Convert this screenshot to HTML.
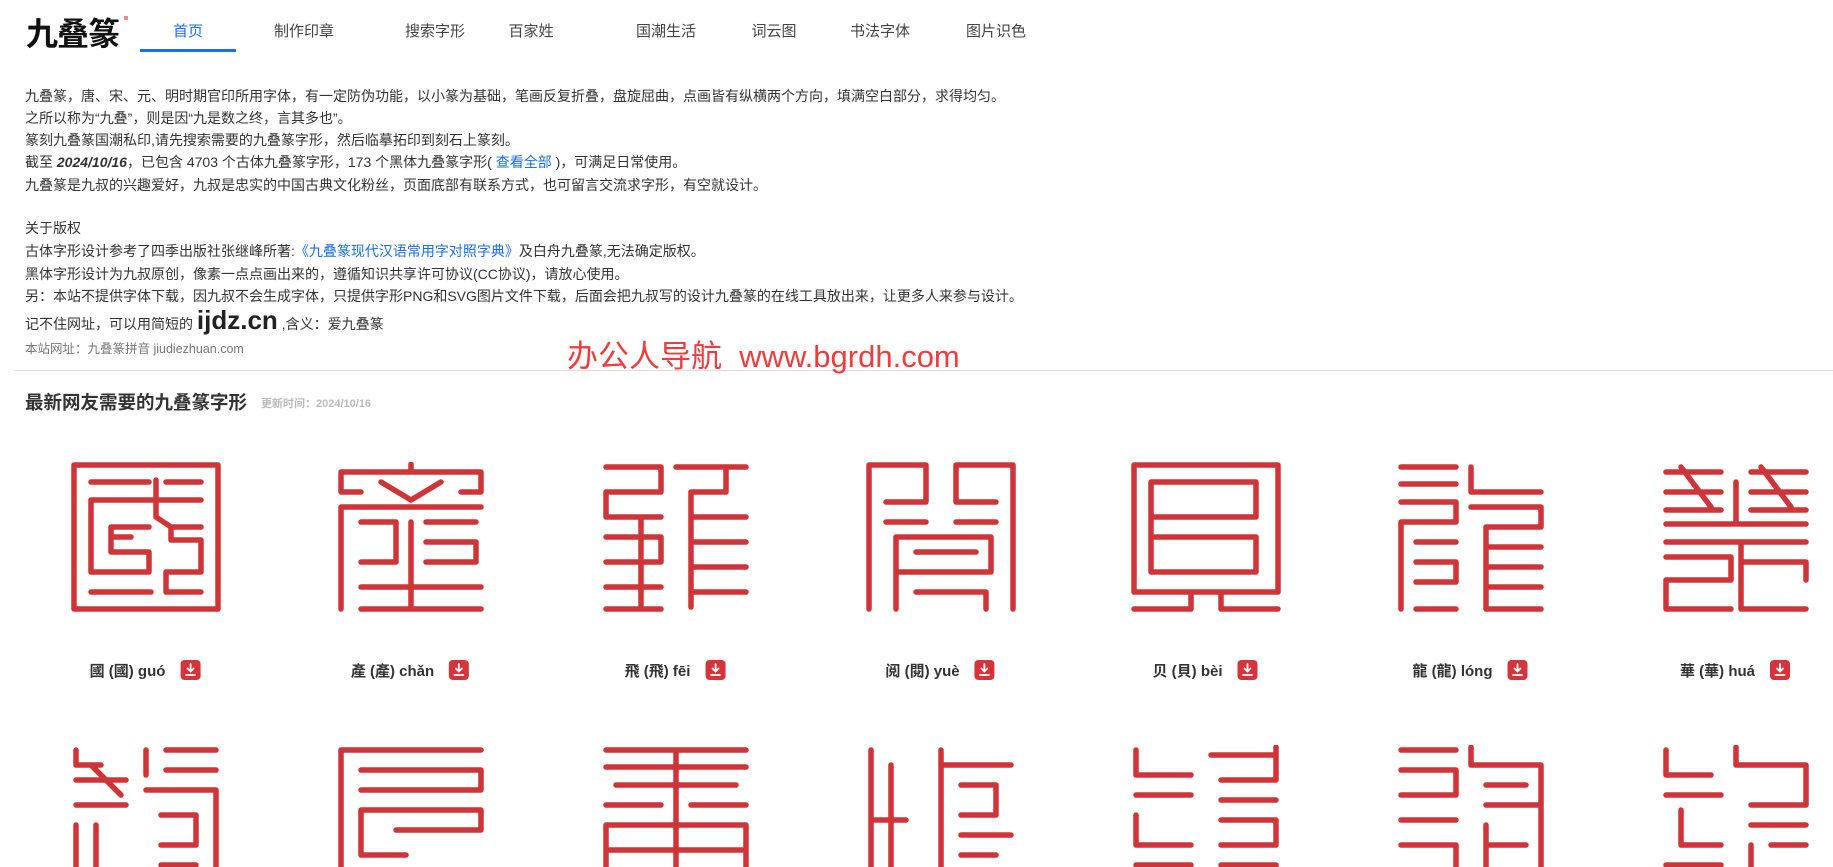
<!DOCTYPE html>
<html><head><meta charset="utf-8">
<style>
*{margin:0;padding:0;box-sizing:border-box}
html,body{width:1833px;height:867px;overflow:hidden;background:#fff}
body{position:relative;font-family:"Liberation Sans","Noto Sans CJK SC",sans-serif;color:#333}
.a{position:absolute;white-space:nowrap}
.logo{left:26px;top:9px;font-size:32px;font-weight:bold;color:#111;letter-spacing:-1px}
.dot{left:124px;top:16px;width:4px;height:4px;background:#f08a8a}
.nav{top:20px;font-size:15px;color:#444;transform:translateX(-50%)}
.ul{left:140px;top:49px;width:96px;height:3px;background:#1a6ef0}
.t{left:25px;font-size:14px;color:#333;line-height:22px}
.blue{color:#1a6ef0}
.g{width:150px;height:150px}
.g path{fill:none;stroke:#cf3538;stroke-width:5.5;stroke-linecap:round;stroke-linejoin:round}
.lb{top:660px;font-size:15px;font-weight:bold;color:#333;transform:translateX(-50%);display:flex;align-items:center;height:20px}
.ic{display:inline-block;width:20px;height:20px;background:#d7333a;border-radius:4px;margin-left:15px;position:relative}
</style></head><body>
<div class="a logo">九叠篆</div><div class="a dot"></div>
<div class="a nav" style="left:188px;color:#1a6ef0">首页</div>
<div class="a nav" style="left:304px">制作印章</div>
<div class="a nav" style="left:435px">搜索字形</div>
<div class="a nav" style="left:531px">百家姓</div>
<div class="a nav" style="left:666px">国潮生活</div>
<div class="a nav" style="left:774px">词云图</div>
<div class="a nav" style="left:880px">书法字体</div>
<div class="a nav" style="left:996px">图片识色</div>
<div class="a ul"></div>

<div class="a t" style="top:85px">九叠篆，唐、宋、元、明时期官印所用字体，有一定防伪功能，以小篆为基础，笔画反复折叠，盘旋屈曲，点画皆有纵横两个方向，填满空白部分，求得均匀。</div>
<div class="a t" style="top:107px">之所以称为“九叠”，则是因“九是数之终，言其多也”。</div>
<div class="a t" style="top:129px">篆刻九叠篆国潮私印,请先搜索需要的九叠篆字形，然后临摹拓印到刻石上篆刻。</div>
<div class="a t" style="top:151px">截至 <b><i>2024/10/16</i></b>，已包含 4703 个古体九叠篆字形，173 个黑体九叠篆字形( <span class="blue">查看全部</span> )，可满足日常使用。</div>
<div class="a t" style="top:174px">九叠篆是九叔的兴趣爱好，九叔是忠实的中国古典文化粉丝，页面底部有联系方式，也可留言交流求字形，有空就设计。</div>
<div class="a t" style="top:217px">关于版权</div>
<div class="a t" style="top:240px">古体字形设计参考了四季出版社张继峰所著:<span class="blue">《九叠篆现代汉语常用字对照字典》</span>及白舟九叠篆,无法确定版权。</div>
<div class="a t" style="top:263px">黑体字形设计为九叔原创，像素一点点画出来的，遵循知识共享许可协议(CC协议)，请放心使用。</div>
<div class="a t" style="top:285px">另：本站不提供字体下载，因九叔不会生成字体，只提供字形PNG和SVG图片文件下载，后面会把九叔写的设计九叠篆的在线工具放出来，让更多人来参与设计。</div>
<div class="a t" style="top:305px;line-height:30px">记不住网址，可以用简短的 <b style="font-size:26px;color:#222">ijdz.cn</b> ,含义：爱九叠篆</div>
<div class="a" style="left:25px;top:338px;font-size:12.5px;color:#777">本站网址：九叠篆拼音 jiudiezhuan.com</div>
<div class="a" style="left:14px;top:370px;width:1819px;height:1px;background:#ddd"></div>
<div class="a" style="left:567px;top:338px;font-size:31px;color:#f03c3c;line-height:38px">办公人导航&nbsp; www.bgrdh.com</div>
<div class="a" style="left:25px;top:389px;font-size:18.5px;font-weight:bold;color:#333">最新网友需要的九叠篆字形</div>
<div class="a" style="left:261px;top:395px;font-size:11px;font-weight:bold;color:#bbb">更新时间：2024/10/16</div>

<svg class="a g" style="left:71px;top:462px" viewBox="0 0 150 150"><path d="M3 3H147V147H3Z M20 20H78 M95 20H130 M20 38H130 M20 38V110H78V90H40V65H78 M85 18V55L100 65L130 65 M100 65V78H130V110H95V130 M20 130H80 M95 130H130 M40 75H60"/></svg>
<svg class="a g" style="left:336px;top:462px" viewBox="0 0 150 150"><path d="M75 2V10 M5 10V30H25 M5 10H145V30H125 M45 20L75 38L105 20 M5 45H145 M5 45V147 M25 60H60V100H25 M90 60H140 M75 60V145 M90 80H140V100H90 M25 125H145 M25 147H145"/></svg>
<svg class="a g" style="left:601px;top:462px" viewBox="0 0 150 150"><path d="M5 5H60V30H5V55H60 M5 75H60V100H5 M5 125H60 M5 147H60 M75 5H145 M125 5V30H90 M90 30V145 M90 55H145 M90 80H145 M90 105H145 M90 130H145 M40 55V147"/></svg>
<svg class="a g" style="left:866px;top:462px" viewBox="0 0 150 150"><path d="M3 3V147 M3 3H60V40H20 M147 3V147 M147 3H90V40H130 M20 60H60 M90 60H130 M30 75H125V110H30 M30 75V147 M50 90H110 M50 130H120V147"/></svg>
<svg class="a g" style="left:1131px;top:462px" viewBox="0 0 150 150"><path d="M3 3H147V130H3Z M20 20H125V55H20V20 M20 55V110H125V75H20 M60 130V147H3 M90 130V147H147"/></svg>
<svg class="a g" style="left:1396px;top:462px" viewBox="0 0 150 150"><path d="M5 5H60 M5 22H60 M5 40H60V60H5V147 M20 80H60 M20 100H60V120H20 M20 147H60 M75 5V30H145 M75 45H145V65H90V147 M90 85H145 M90 105H145 M90 125H145 M90 147H145"/></svg>
<svg class="a g" style="left:1661px;top:462px" viewBox="0 0 150 150"><path d="M5 10H60 M5 30H60 M20 5L50 45 M5 48H60 M90 10H145 M90 30H145 M100 5L130 45 M90 48H145 M75 20V62 M5 62H145 M5 80H145 M5 95H70V118H5 M5 118V147H70 M80 80V147H145 M80 100H145V118"/></svg>

<div class="a lb" style="left:145px">國 (國) guó<span class="ic"><svg width="20" height="20" viewBox="0 0 20 20"><path d="M10 4V11 M7 8.5L10 11.5L13 8.5 M5.5 15H14.5" fill="none" stroke="#fff" stroke-width="1.8" stroke-linecap="round"/></svg></span></div>
<div class="a lb" style="left:410px">產 (產) chǎn<span class="ic"><svg width="20" height="20" viewBox="0 0 20 20"><path d="M10 4V11 M7 8.5L10 11.5L13 8.5 M5.5 15H14.5" fill="none" stroke="#fff" stroke-width="1.8" stroke-linecap="round"/></svg></span></div>
<div class="a lb" style="left:675px">飛 (飛) fēi<span class="ic"><svg width="20" height="20" viewBox="0 0 20 20"><path d="M10 4V11 M7 8.5L10 11.5L13 8.5 M5.5 15H14.5" fill="none" stroke="#fff" stroke-width="1.8" stroke-linecap="round"/></svg></span></div>
<div class="a lb" style="left:940px">阅 (閱) yuè<span class="ic"><svg width="20" height="20" viewBox="0 0 20 20"><path d="M10 4V11 M7 8.5L10 11.5L13 8.5 M5.5 15H14.5" fill="none" stroke="#fff" stroke-width="1.8" stroke-linecap="round"/></svg></span></div>
<div class="a lb" style="left:1205px">贝 (貝) bèi<span class="ic"><svg width="20" height="20" viewBox="0 0 20 20"><path d="M10 4V11 M7 8.5L10 11.5L13 8.5 M5.5 15H14.5" fill="none" stroke="#fff" stroke-width="1.8" stroke-linecap="round"/></svg></span></div>
<div class="a lb" style="left:1470px">龍 (龍) lóng<span class="ic"><svg width="20" height="20" viewBox="0 0 20 20"><path d="M10 4V11 M7 8.5L10 11.5L13 8.5 M5.5 15H14.5" fill="none" stroke="#fff" stroke-width="1.8" stroke-linecap="round"/></svg></span></div>
<div class="a lb" style="left:1735px">華 (華) huá<span class="ic"><svg width="20" height="20" viewBox="0 0 20 20"><path d="M10 4V11 M7 8.5L10 11.5L13 8.5 M5.5 15H14.5" fill="none" stroke="#fff" stroke-width="1.8" stroke-linecap="round"/></svg></span></div>

<svg class="a g" style="left:71px;top:745px" viewBox="0 0 150 150"><path d="M5 5V20H30 M5 35H55 M20 20L50 50 M5 60H55 M5 80V147 M25 80V147 M75 5V30 M95 5H145 M95 25H145 M75 45H145V147 M90 70H125V100H90 M90 120H125"/></svg>
<svg class="a g" style="left:336px;top:745px" viewBox="0 0 150 150"><path d="M5 5H145 M5 5V147 M25 25H145V45H25 M25 65H145V85H60 M25 65V110H70 M25 130H130V147"/></svg>
<svg class="a g" style="left:601px;top:745px" viewBox="0 0 150 150"><path d="M5 5H145 M5 22H145 M75 5V147 M15 40H135 M5 60H60 M90 60H145 M5 80H145V147 M5 80V147 M5 105H145 M5 125H145"/></svg>
<svg class="a g" style="left:866px;top:745px" viewBox="0 0 150 150"><path d="M5 5V147 M25 20V147 M5 75H40 M75 5V20H145 M75 20V147 M95 40H130V70H95 M95 90H145 M95 110H130 M95 130H145V147"/></svg>
<svg class="a g" style="left:1131px;top:745px" viewBox="0 0 150 150"><path d="M5 5V30H60 M5 50H60 M5 70V100H60 M5 120H60 M5 147H60 M80 10H145V35H90 M90 55H145 M90 75H145V100H90 M90 120H145V147 M145 2V10"/></svg>
<svg class="a g" style="left:1396px;top:745px" viewBox="0 0 150 150"><path d="M5 5H60 M5 25H60V50H5 M5 75H60 M5 100H60V125H5 M5 147H60 M75 2V20H145V147 M90 40H130 M90 60H145 M90 80V147 M90 100H130 M90 125H145"/></svg>
<svg class="a g" style="left:1661px;top:745px" viewBox="0 0 150 150"><path d="M5 5V30H50 M5 50H60 M20 65V100H60 M5 120H60 M5 147H60 M75 2V20H145V60H90 M90 80H145 M90 100V147 M110 100H145 M110 125H145"/></svg>
</body></html>
